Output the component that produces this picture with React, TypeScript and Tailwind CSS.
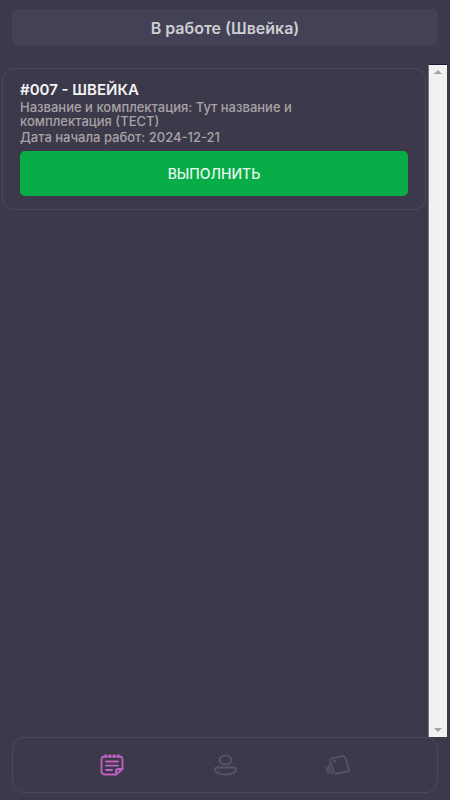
import type { ReactNode } from "react";

type Order = {
  id: string;
  stage: string;
  title: string;
  startDate: string;
};

const orders: Order[] = [
  {
    id: "007",
    stage: "ШВЕЙКА",
    title: "Тут название и комплектация (ТЕСТ)",
    startDate: "2024-12-21",
  },
];

export default function App() {
  return (
    <div className="flex h-screen flex-col bg-[#3c394a] pb-[7px] font-['Inter','Noto_Sans',sans-serif]">
      <header className="mx-3 mt-[9px] flex h-[37px] shrink-0 items-center justify-center rounded-md bg-[#424155]">
        <h1 className="text-[16px] font-semibold text-[#cfcdd2]">В работе (Швейка)</h1>
      </header>

      <div className="mt-[18px] flex min-h-0 flex-1 pr-[3px]">
        <main className="min-w-0 flex-1 overflow-hidden pt-1 pr-[2px] pl-[2px]">
          {orders.map((order) => (
            <OrderCard key={order.id} order={order} />
          ))}
        </main>
        <ScrollTrack />
      </div>

      <nav className="mx-3 flex h-14 shrink-0 items-center justify-evenly rounded-xl border border-[#4b495c]">
        <NavItem label="Заказы" active>
          <NotesIcon />
        </NavItem>
        <NavItem label="Профиль">
          <UserIcon />
        </NavItem>
        <NavItem label="Карточки">
          <CardsIcon />
        </NavItem>
      </nav>
    </div>
  );
}

function OrderCard({ order }: { order: Order }) {
  return (
    <article className="rounded-xl border border-[#4b495c] px-[17px] pt-3 pb-[13px]">
      <h2 className="text-[15px] leading-[17px] font-semibold text-[#f4f3f6]">
        #{order.id} - {order.stage}
      </h2>
      <p className="mt-[2px] max-w-[320px] text-[13px] leading-[14px] font-medium text-[#a9a3a6]">
        Название и комплектация: {order.title}
      </p>
      <p className="mt-[2px] text-[13px] leading-[14px] font-medium text-[#a9a3a6]">
        Дата начала работ: {order.startDate}
      </p>
      <button
        type="button"
        className="mt-[7px] flex h-[45px] w-full items-center justify-center rounded-[5px] bg-[#08ad48] text-[14px] font-medium text-[#e9f8ee]"
      >
        ВЫПОЛНИТЬ
      </button>
    </article>
  );
}

function ScrollTrack() {
  return (
    <div
      aria-hidden="true"
      className="flex w-[19px] shrink-0 flex-col items-center justify-between border-t border-l border-t-[#1b1838] border-l-[#77758a] bg-[#f1f1f1] py-[5px]"
    >
      <svg width="8" height="4" viewBox="0 0 8 4" fill="#a3a3a3">
        <path d="M0 4 4 0l4 4z" />
      </svg>
      <svg width="8" height="4" viewBox="0 0 8 4" fill="#a3a3a3">
        <path d="M0 0h8L4 4z" />
      </svg>
    </div>
  );
}

function NavItem({
  label,
  active = false,
  children,
}: {
  label: string;
  active?: boolean;
  children: ReactNode;
}) {
  return (
    <a
      href="#"
      aria-label={label}
      aria-current={active ? "page" : undefined}
      className={`flex h-10 w-7 items-center justify-center ${
        active ? "text-[#c05fc4]" : "text-[#575467]"
      }`}
    >
      {children}
    </a>
  );
}

function NotesIcon() {
  return (
    <svg
      width="26"
      height="24"
      viewBox="0 0 26 24"
      fill="none"
      stroke="currentColor"
      strokeWidth="1.8"
      strokeLinecap="round"
      strokeLinejoin="round"
    >
      <path d="M17 21.5H5.5a3 3 0 0 1-3-3V6.5a3 3 0 0 1 3-3h15a3 3 0 0 1 3 3V16z" />
      <path d="M17 21.5v-3a2.500 2.500 0 0 1 2.500-2.500h4" />
      <path d="M6.5 2v2M10.8 2v2M15.2 2v2M19.5 2v2" />
      <path d="M7 8.5h12M7 12.7h12M7 17h6" />
    </svg>
  );
}

function UserIcon() {
  return (
    <svg
      width="26"
      height="24"
      viewBox="0 0 26 24"
      fill="none"
      stroke="currentColor"
      strokeWidth="1.8"
      strokeLinejoin="round"
    >
      <ellipse cx="13.5" cy="7" rx="6" ry="4.6" />
      <path d="M5.3 14.5h16.4c1.4 0 2.3.8 2.3 1.9 0 3.2-4.8 5.1-10.5 5.1S3 19.6 3 16.4c0-1.1.9-1.9 2.3-1.9z" />
    </svg>
  );
}

function CardsIcon() {
  return (
    <svg
      width="26"
      height="24"
      viewBox="0 0 26 24"
      fill="none"
      stroke="currentColor"
      strokeWidth="1.7"
      strokeLinecap="round"
      strokeLinejoin="round"
    >
      <path d="M6.8 5.4 17.6 3.2c1.300-.2 2.300.4 2.700 1.500l3.500 11c.4 1.300-.3 2.400-1.700 2.700l-10.600 2.200c-1.300.2-2.400-.4-2.700-1.500L5.100 8.100c-.4-1.300.4-2.400 1.700-2.700z" />
      <circle cx="10" cy="8" r="0.7" fill="currentColor" />
      <path d="M4 12c-.3 3 .5 5.800 2.700 8.300M1.500 14c-.3 2 .2 4 1.700 5.800" />
    </svg>
  );
}
